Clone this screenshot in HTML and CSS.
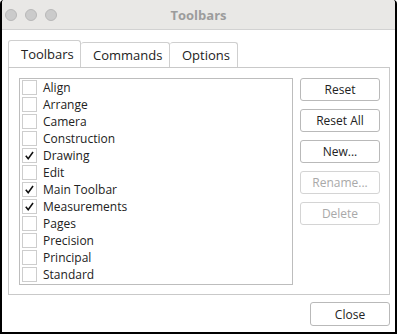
FILE: index.html
```html
<!DOCTYPE html>
<html lang="en">
<head>
<meta charset="UTF-8">
<title>Toolbars</title>
<link rel="stylesheet" href="styles.css">
</head>
<body>

<div class="window">
    <div class="titlebar">
        <div class="lights">
            <span class="light"></span>
            <span class="light"></span>
            <span class="light"></span>
        </div>
        <div class="title">Toolbars</div>
    </div>

    <div class="content">
        <div class="tabs">
            <div class="tab active">Toolbars</div>
            <div class="tab">Commands</div>
            <div class="tab">Options</div>
        </div>

        <div class="panel">
            <ul class="list">
                <li><span class="check"></span>Align</li>
                <li><span class="check"></span>Arrange</li>
                <li><span class="check"></span>Camera</li>
                <li><span class="check"></span>Construction</li>
                <li><span class="check on"><svg viewBox="0 0 14 14"><path d="M3 7.2 L5.6 10.4 L10.8 3.2"/></svg></span>Drawing</li>
                <li><span class="check"></span>Edit</li>
                <li><span class="check on"><svg viewBox="0 0 14 14"><path d="M3 7.2 L5.6 10.4 L10.8 3.2"/></svg></span>Main Toolbar</li>
                <li><span class="check on"><svg viewBox="0 0 14 14"><path d="M3 7.2 L5.6 10.4 L10.8 3.2"/></svg></span>Measurements</li>
                <li><span class="check"></span>Pages</li>
                <li><span class="check"></span>Precision</li>
                <li><span class="check"></span>Principal</li>
                <li><span class="check"></span>Standard</li>
            </ul>
            <div class="buttons">
                <button class="btn">Reset</button>
                <button class="btn">Reset All</button>
                <button class="btn">New...</button>
                <button class="btn" disabled>Rename...</button>
                <button class="btn" disabled>Delete</button>
            </div>
        </div>

        <div class="footer">
            <button class="btn close">Close</button>
        </div>
    </div>
</div>

</body>
</html>
```

FILE: styles.css
```css
/* 基本 */
* {
    box-sizing: border-box;
}
body {
    margin: 0;
    font-family: "Open Sans", "Noto Sans", sans-serif;
    font-size: 12px;
    color: #222;
    background: #fff;
}
.window {
    width: 397px;
    height: 334px;
    border: 2px solid #000;
    border-top: none;
    border-radius: 4px 4px 0 0;
    background: #fff;
    overflow: hidden;
}

/* タイトルバー */
.titlebar {
    height: 30px;
    background: #e9e8e6;
    border-bottom: 1px solid #d2d2d2;
    display: flex;
    align-items: center;
    position: relative;
}
.lights {
    display: flex;
    gap: 8px;
    padding-left: 3px;
}
.light {
    width: 12px;
    height: 12px;
    border-radius: 50%;
    background: #cbcbcb;
    border: 1px solid #b8b8b8;
}
.title {
    position: absolute;
    left: 0;
    right: 0;
    text-align: center;
    font-weight: bold;
    font-size: 13px;
    color: #9c9c9c;
}

.content {
    padding: 10px 5px 0 6px;
}

/* タブ */
.tabs {
    display: flex;
    align-items: flex-end;
    height: 27px;
}
.tab {
    height: 25px;
    padding: 0 12px;
    border: 1px solid #cfcfcf;
    border-bottom: none;
    border-left: none;
    border-radius: 3px 3px 0 0;
    display: flex;
    align-items: center;
    font-size: 13px;
    color: #222;
}
.tab.active {
    height: 27px;
    border-left: 1px solid #cfcfcf;
    width: 73px;
}
.tab:nth-child(2) {
    width: 89px;
}
.tab:nth-child(3) {
    width: 68px;
}

/* パネル */
.panel {
    height: 228px;
    border: 1px solid #c9c9c9;
    padding: 10px 9px 0 10px;
    display: flex;
    gap: 7px;
}
.list {
    list-style: none;
    margin: 0;
    padding: 0 0 0 2px;
    width: 274px;
    height: 207px;
    border: 1px solid #bdbdbd;
}
.list li {
    height: 17px;
    display: flex;
    align-items: center;
    gap: 6px;
}
.check {
    width: 15px;
    height: 15px;
    border: 1px solid #cdcdcd;
    background: #fff;
    display: flex;
}
.check svg {
    width: 13px;
    height: 13px;
}
.check path {
    fill: none;
    stroke: #111;
    stroke-width: 1.7;
}

/* ボタン */
.buttons {
    display: flex;
    flex-direction: column;
    gap: 8px;
}
.btn {
    width: 80px;
    height: 23px;
    font-family: inherit;
    font-size: 12px;
    color: #222;
    background: #fff;
    border: 1px solid #b9b9b9;
    border-radius: 3px;
    padding: 0;
}
.btn:disabled {
    color: #a9a9a9;
    border-color: #d4d4d4;
}

.footer {
    display: flex;
    justify-content: flex-end;
    padding-top: 7px;
}
.close {
    height: 24px;
}
```
